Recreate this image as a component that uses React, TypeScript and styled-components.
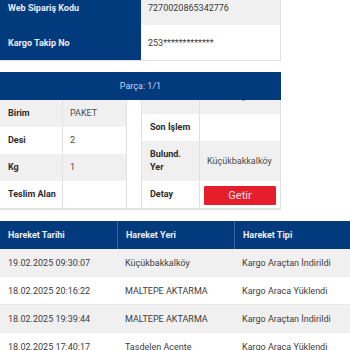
import { useLayoutEffect, useRef } from "react";
import styled, { createGlobalStyle } from "styled-components";

const BLUE = "#023a7e";
const ROW_ALT = "#f0f0f0";
const LINE = "#e2e2e2";

const GlobalStyle = createGlobalStyle`
  html, body {
    margin: 0;
    padding: 0;
    background: #ffffff;
  }
  body {
    font-family: Roboto, "Liberation Sans", Arial, sans-serif;
    color: #333333;
  }
`;

const orderRows = [
  { label: "Sipariş Tarihi", value: "17.02.2025" },
  { label: "Web Sipariş Kodu", value: "7270020865342776" },
  { label: "Kargo Takip No", value: "253*************" },
];

const pieceLeft = [
  { label: "Birim", value: "PAKET" },
  { label: "Desi", value: "2" },
  { label: "Kg", value: "1" },
  { label: "Teslim Alan", value: "" },
];

const movements = [
  { date: "19.02.2025 09:30:07", place: "Küçükbakkalköy", type: "Kargo Araçtan İndirildi" },
  { date: "18.02.2025 20:16:22", place: "MALTEPE AKTARMA", type: "Kargo Araca Yüklendi" },
  { date: "18.02.2025 19:39:44", place: "MALTEPE AKTARMA", type: "Kargo Araçtan İndirildi" },
  { date: "18.02.2025 17:40:17", place: "Tasdelen Acente", type: "Kargo Araca Yüklendi" },
  { date: "18.02.2025 15:02:51", place: "Tasdelen Acente", type: "Kargo Kabul Edildi" },
];

const App = () => {
  const pageRef = useRef<HTMLDivElement>(null);
  const trackRowRef = useRef<HTMLDivElement>(null);
  const statusBoxRef = useRef<HTMLDivElement>(null);
  const statusRowRef = useRef<HTMLDivElement>(null);

  useLayoutEffect(() => {
    const page = pageRef.current;
    const row = trackRowRef.current;
    if (page && row) {
      page.scrollTop = row.offsetTop - 25;
    }
    const box = statusBoxRef.current;
    const first = statusRowRef.current;
    if (box && first) {
      box.scrollTop = first.offsetHeight - 13;
    }
  }, []);

  return (
    <>
      <GlobalStyle />
      <Page ref={pageRef}>
        <OrderTable>
          {orderRows.map((r, i) => (
            <OrderRow key={r.label} ref={i === 2 ? trackRowRef : undefined}>
              <OrderLabel>{r.label}</OrderLabel>
              <OrderValue $alt={i % 2 === 1}>{r.value}</OrderValue>
            </OrderRow>
          ))}
        </OrderTable>

        <PiecePanel>
          <PieceHeader>Parça: 1/1</PieceHeader>
          <PieceBody>
            <PieceBox>
              {pieceLeft.map((r, i) => (
                <PieceRow key={r.label} $alt={i % 2 === 0} $cols="63px 1fr">
                  <PieceLabel>{r.label}</PieceLabel>
                  <PieceValue>{r.value}</PieceValue>
                </PieceRow>
              ))}
            </PieceBox>
            <PieceBox ref={statusBoxRef} $scroll>
              <PieceRow ref={statusRowRef} $alt $cols="58px 1fr" $minH={49}>
                <PieceLabel>Durum</PieceLabel>
                <PieceValue>Teslimata Hazırlanıyor</PieceValue>
              </PieceRow>
              <PieceRow $cols="58px 1fr">
                <PieceLabel>Son İşlem</PieceLabel>
                <PieceValue></PieceValue>
              </PieceRow>
              <PieceRow $alt $cols="58px 1fr">
                <PieceLabel>Bulund. Yer</PieceLabel>
                <PieceValue>Küçükbakkalköy</PieceValue>
              </PieceRow>
              <PieceRow $cols="58px 1fr">
                <PieceLabel>Detay</PieceLabel>
                <ButtonCell>
                  <FetchButton>Getir</FetchButton>
                </ButtonCell>
              </PieceRow>
            </PieceBox>
          </PieceBody>
        </PiecePanel>

        <MoveTable>
          <MoveHead>Hareket Tarihi</MoveHead>
          <MoveHead>Hareket Yeri</MoveHead>
          <MoveHead>Hareket Tipi</MoveHead>
          {movements.map((m, i) => (
            <MoveRow key={m.date} $alt={i % 2 === 0}>
              <MoveCell>{m.date}</MoveCell>
              <MoveCell>{m.place}</MoveCell>
              <MoveCell>{m.type}</MoveCell>
            </MoveRow>
          ))}
        </MoveTable>
      </Page>
    </>
  );
};

export default App;

const Page = styled.div`
  position: relative;
  width: 350px;
  height: 350px;
  overflow: hidden;
  background: #ffffff;
`;

const OrderTable = styled.div`
  width: 281px;
  border-right: 1px solid ${LINE};
  border-bottom: 1px solid ${LINE};
  box-sizing: border-box;
`;

const OrderRow = styled.div`
  display: grid;
  grid-template-columns: 141px 1fr;
  height: 35px;
`;

const OrderLabel = styled.div`
  display: flex;
  align-items: center;
  padding: 0 8px;
  background: ${BLUE};
  color: #e9eef6;
  font-size: 9px;
  font-weight: 700;
`;

const OrderValue = styled.div<{ $alt?: boolean }>`
  display: flex;
  align-items: center;
  padding: 0 7px;
  background: ${(p) => (p.$alt ? ROW_ALT : "#ffffff")};
  color: #3a3a3a;
  font-size: 9px;
`;

const PiecePanel = styled.div`
  width: 281px;
  margin-top: 11px;
  border-bottom: 2px solid ${LINE};
  box-sizing: border-box;
`;

const PieceHeader = styled.div`
  height: 28px;
  display: flex;
  align-items: center;
  justify-content: center;
  background: ${BLUE};
  color: #c9d6ea;
  font-size: 9px;
`;

const PieceBody = styled.div`
  display: grid;
  grid-template-columns: 127px 139px;
  justify-content: space-between;
  height: 108px;
  border-right: 1px solid ${LINE};
`;

const PieceBox = styled.div<{ $scroll?: boolean }>`
  height: 108px;
  overflow: hidden;
  border-right: ${(p) => (p.$scroll ? "none" : `1px solid ${LINE}`)};
  border-left: ${(p) => (p.$scroll ? `1px solid ${LINE}` : "none")};
  box-sizing: border-box;
`;

const PieceRow = styled.div<{ $alt?: boolean; $cols: string; $minH?: number }>`
  display: grid;
  grid-template-columns: ${(p) => p.$cols};
  min-height: ${(p) => p.$minH ?? 27}px;
  background: ${(p) => (p.$alt ? ROW_ALT : "#ffffff")};
`;

const PieceLabel = styled.div`
  display: flex;
  align-items: center;
  padding: 7px 4px 7px 8px;
  border-right: 1px solid ${LINE};
  color: #2b2b2b;
  font-size: 9px;
  font-weight: 700;
  line-height: 13px;
`;

const PieceValue = styled.div`
  display: flex;
  align-items: center;
  padding: 7px 7px;
  color: #4a4a4a;
  font-size: 9px;
  line-height: 13px;
`;

const ButtonCell = styled.div`
  display: flex;
  align-items: center;
  padding: 4px 4px 3px 4px;
`;

const FetchButton = styled.button`
  width: 72px;
  height: 19px;
  border: none;
  border-radius: 1px;
  background: #e61e2b;
  color: #fbe3e4;
  font-family: inherit;
  font-size: 11px;
  padding: 0;
  cursor: pointer;
`;

const MoveTable = styled.div`
  display: grid;
  grid-template-columns: repeat(3, 117px);
  width: 351px;
  margin-top: 11px;
`;

const MoveHead = styled.div`
  height: 28px;
  display: flex;
  align-items: center;
  padding: 0 8px;
  background: ${BLUE};
  color: #e9eef6;
  font-size: 9px;
  font-weight: 700;
  border-left: 1px solid #3a64a0;

  &:first-child {
    border-left: none;
  }
`;

const MoveRow = styled.div<{ $alt?: boolean }>`
  display: contents;

  & > div {
    background: ${(p) => (p.$alt ? ROW_ALT : "#ffffff")};
  }
`;

const MoveCell = styled.div`
  height: 27px;
  display: flex;
  align-items: center;
  padding: 0 8px;
  border-bottom: 1px solid #ececec;
  color: #3d3d3d;
  font-size: 9px;
  white-space: nowrap;
`;
